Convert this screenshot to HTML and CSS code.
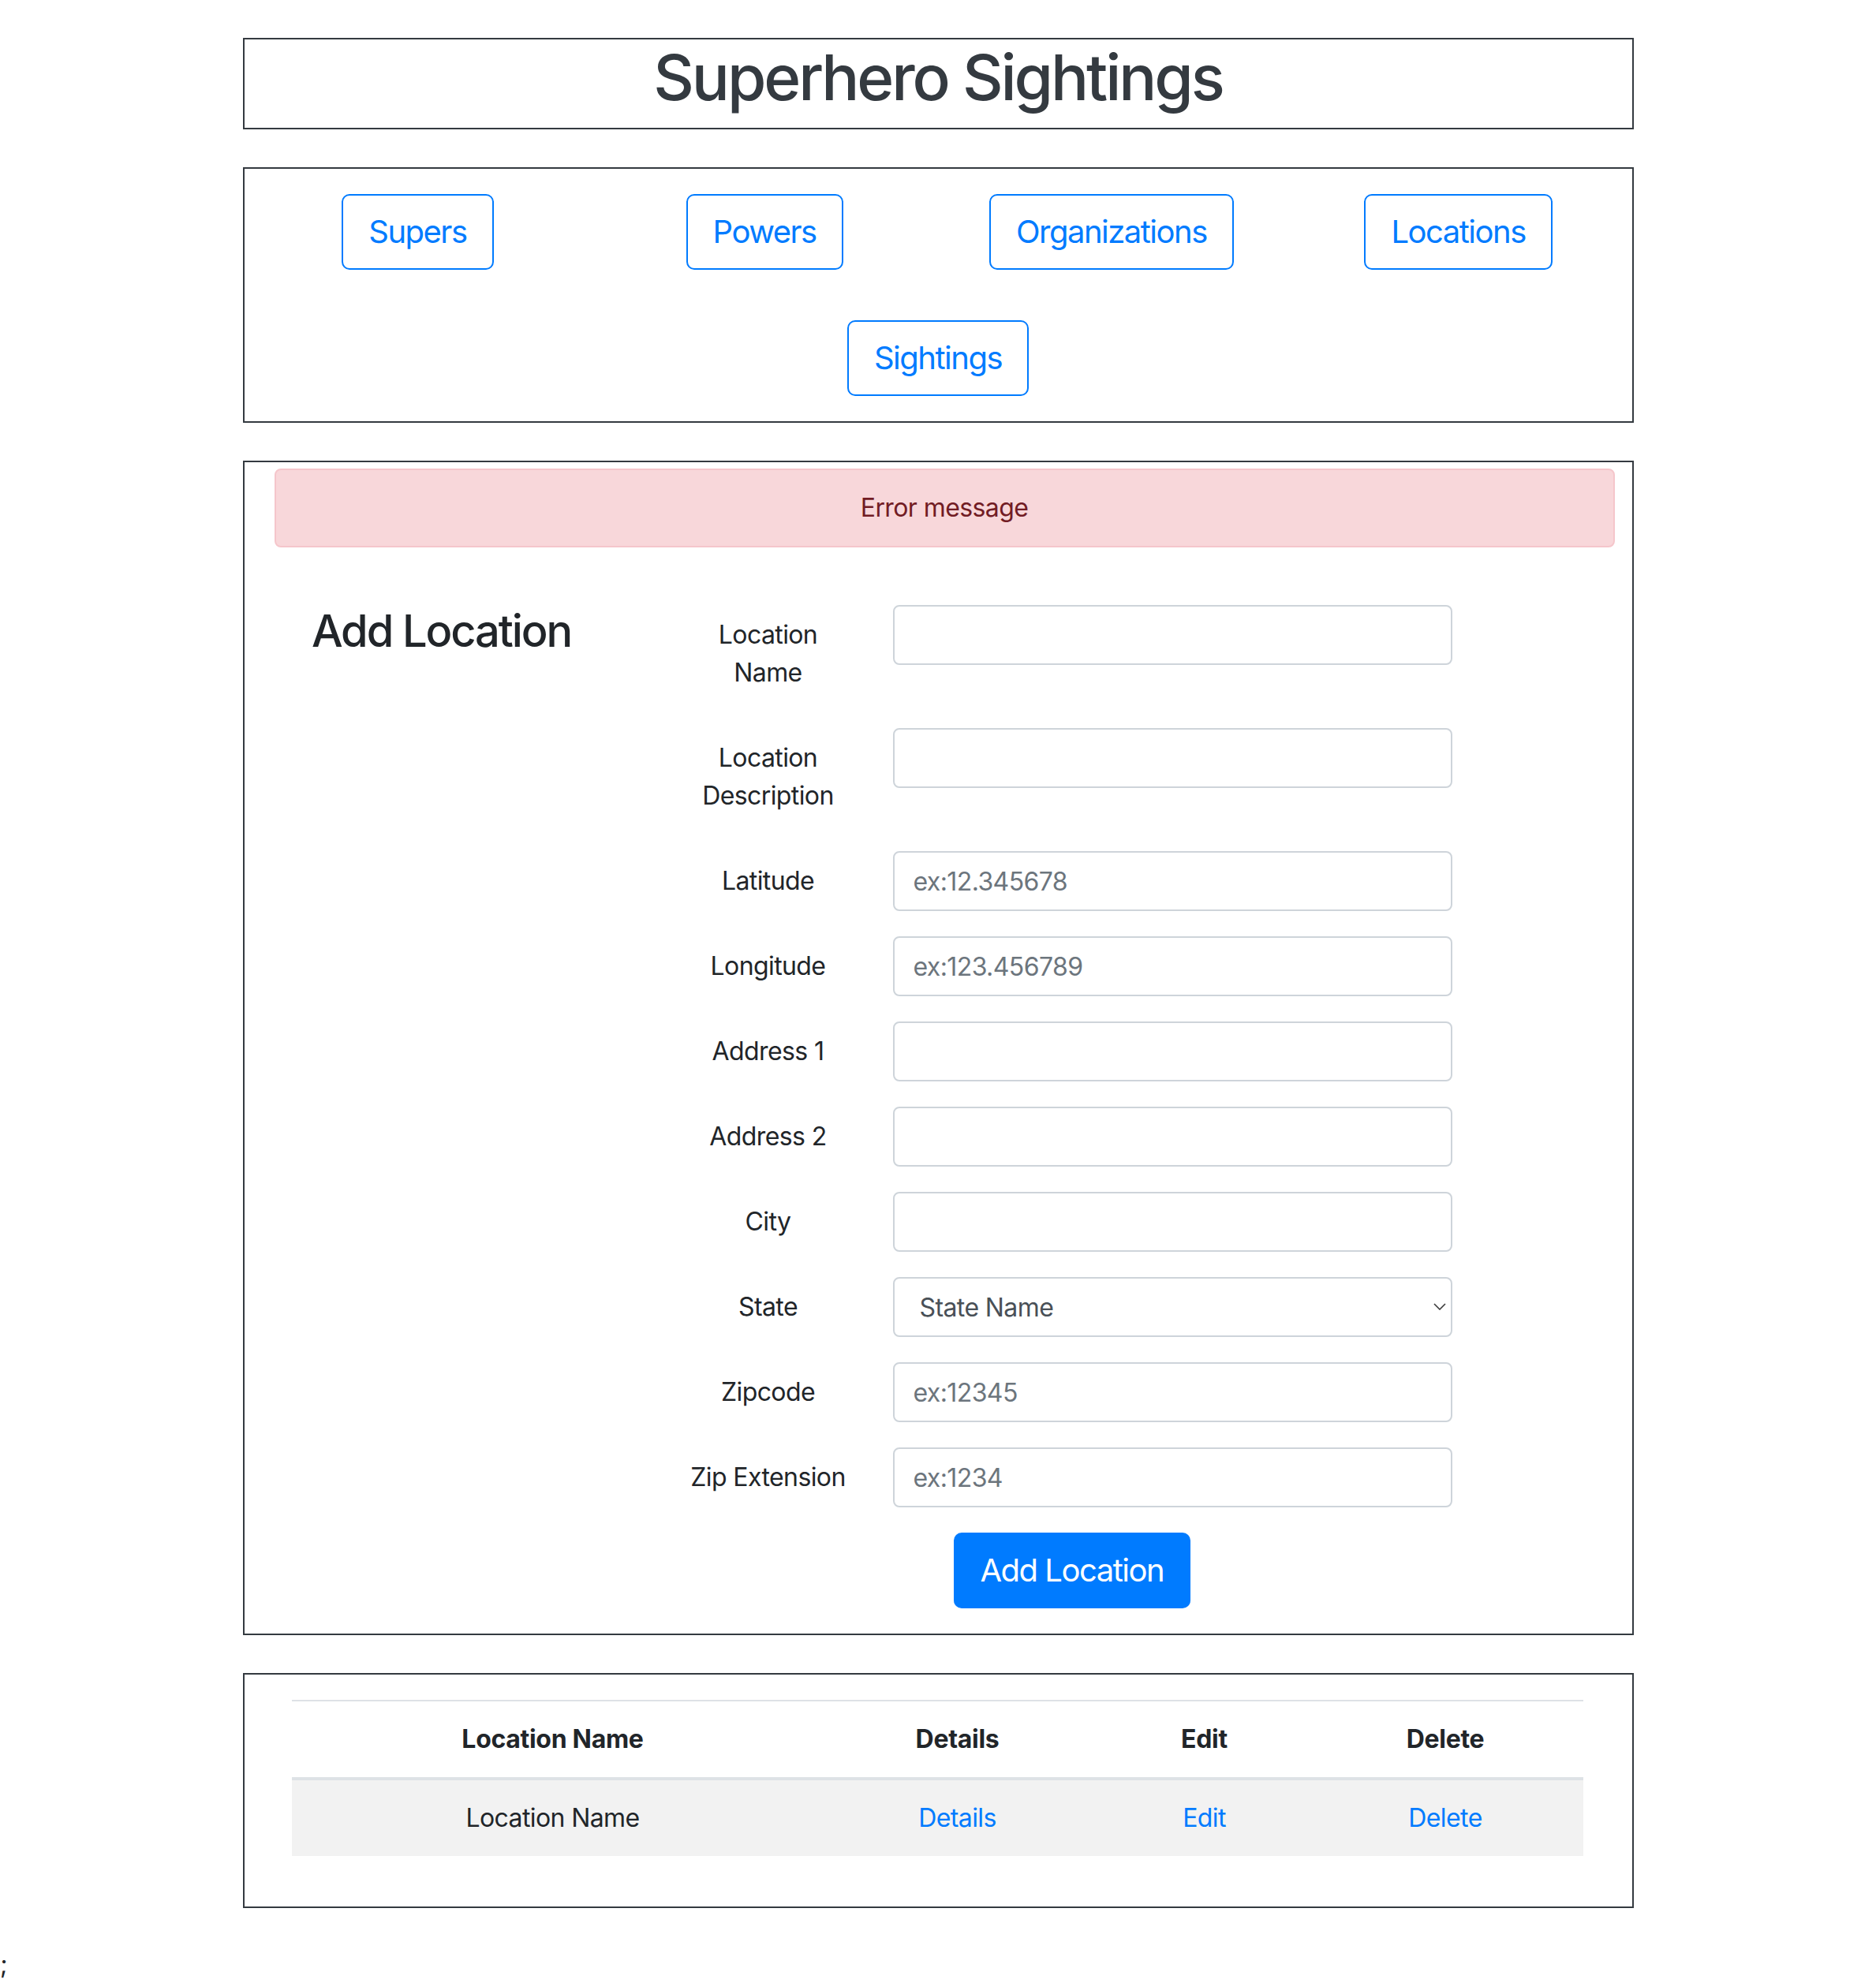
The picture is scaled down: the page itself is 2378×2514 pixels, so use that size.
FILE: index.html
```html
<!DOCTYPE html>
<html lang="en">
<head>
<meta charset="utf-8">
<title>Superhero Sightings</title>
<link rel="stylesheet" href="styles.css">
</head>
<body>
<div class="page">
  <header class="box title-box">
    <h1>Superhero Sightings</h1>
  </header>

  <nav class="box nav-box">
    <div class="nav-cell"><a class="btn btn-outline" href="#">Supers</a></div>
    <div class="nav-cell"><a class="btn btn-outline" href="#">Powers</a></div>
    <div class="nav-cell"><a class="btn btn-outline" href="#">Organizations</a></div>
    <div class="nav-cell"><a class="btn btn-outline" href="#">Locations</a></div>
    <div class="nav-cell"><a class="btn btn-outline" href="#">Sightings</a></div>
  </nav>

  <section class="box form-box">
    <div class="alert">Error message</div>
    <div class="form-row">
      <div class="heading-col"><h3>Add Location</h3></div>
      <form class="form-col">
        <div class="field"><label>Location<br>Name</label><input type="text"></div>
        <div class="field"><label>Location<br>Description</label><input type="text"></div>
        <div class="field"><label>Latitude</label><input type="text" placeholder="ex:12.345678"></div>
        <div class="field"><label>Longitude</label><input type="text" placeholder="ex:123.456789"></div>
        <div class="field"><label>Address 1</label><input type="text"></div>
        <div class="field"><label>Address 2</label><input type="text"></div>
        <div class="field"><label>City</label><input type="text"></div>
        <div class="field"><label>State</label>
          <div class="select-wrap">
            <select><option>State Name</option></select>
            <svg class="chev" viewBox="0 0 16 9" width="16" height="9"><polyline points="1,1 8,8 15,1" fill="none" stroke="#3a3a3a" stroke-width="1.6"/></svg>
          </div>
        </div>
        <div class="field"><label>Zipcode</label><input type="text" placeholder="ex:12345"></div>
        <div class="field"><label>Zip Extension</label><input type="text" placeholder="ex:1234"></div>
        <div class="submit-row"><button type="button" class="btn btn-primary">Add Location</button></div>
      </form>
    </div>
  </section>

  <section class="box table-box">
    <table>
      <colgroup>
        <col class="c1"><col class="c2"><col class="c3"><col class="c4">
      </colgroup>
      <thead>
        <tr><th>Location Name</th><th>Details</th><th>Edit</th><th>Delete</th></tr>
      </thead>
      <tbody>
        <tr><td>Location Name</td><td><a href="#">Details</a></td><td><a href="#">Edit</a></td><td><a href="#">Delete</a></td></tr>
      </tbody>
    </table>
  </section>
</div>
;
</body>
</html>
```

FILE: styles.css
```css
*, *::before, *::after { box-sizing: border-box; }

html, body { margin: 0; padding: 0; }

body {
  font-family: Inter, "Noto Sans", "Liberation Sans", sans-serif;
  font-size: 32px;
  line-height: 48px;
  letter-spacing: -0.6px;
  color: #212529;
  background: #ffffff;
}

.page {
  width: 1763px;
  margin: 0 auto;
  padding-top: 48px;
}

.box {
  border: 2px solid #343a40;
  margin-bottom: 48px;
}

.title-box h1 {
  margin: 0 0 16px;
  font-size: 80px;
  line-height: 96px;
  font-weight: 500;
  letter-spacing: -3.1px;
  text-align: center;
  color: #343a40;
}

.nav-box {
  display: flex;
  flex-wrap: wrap;
  justify-content: center;
}

.nav-cell {
  width: 25%;
  padding: 32px 0;
  display: flex;
  justify-content: center;
}

.btn {
  display: inline-block;
  font-family: inherit;
  font-size: 40px;
  line-height: 60px;
  font-weight: 400;
  letter-spacing: -1.5px;
  padding: 16px 32px;
  border: 2px solid #007bff;
  border-radius: 10px;
  text-decoration: none;
  cursor: pointer;
}

.btn-outline { color: #007bff; background: #ffffff; }
.btn-primary { color: #ffffff; background: #007bff; }

.alert {
  margin: 8px 22px 73px 38px;
  padding: 24px 40px;
  border: 2px solid #f5c6cb;
  border-radius: 8px;
  background: #f8d7da;
  color: #721c24;
  text-align: center;
}

.form-row {
  display: flex;
  align-items: flex-start;
}

.heading-col {
  width: 500px;
  flex: none;
  text-align: center;
}

.heading-col h3 {
  margin: 0;
  font-size: 56px;
  line-height: 67px;
  font-weight: 500;
  letter-spacing: -2.1px;
  color: #212529;
}

.form-col { flex: 1; }

.field {
  display: flex;
  align-items: flex-start;
  margin-bottom: 32px;
}

.field label {
  width: 322px;
  flex: none;
  padding: 14px 0 14px 6px;
  text-align: center;
}

.field input,
.select-wrap {
  width: 709px;
  flex: none;
}

.field input,
.field select {
  height: 76px;
  border: 2px solid #ced4da;
  border-radius: 8px;
  background: #ffffff;
  font-family: inherit;
  font-size: 32px;
  letter-spacing: -0.6px;
  color: #495057;
  padding: 0 24px;
  outline: none;
}

.field input::placeholder { color: #6c757d; opacity: 1; }

.select-wrap { position: relative; }

.field select {
  width: 100%;
  appearance: none;
  -webkit-appearance: none;
  padding-left: 32px;
}

.chev {
  position: absolute;
  right: 8px;
  top: 33px;
  pointer-events: none;
}

.submit-row {
  padding-left: 399px;
  padding-bottom: 32px;
}

.table-box {
  padding: 32px 62px 32px 60px;
}

table {
  width: 100%;
  border-collapse: collapse;
  table-layout: fixed;
  margin-bottom: 32px;
}

col.c1 { width: 662px; }
col.c2 { width: 364px; }
col.c3 { width: 262px; }
col.c4 { width: 349px; }

th, td {
  padding: 24px;
  text-align: center;
  border-top: 2px solid #dee2e6;
  line-height: 48px;
}

thead th {
  font-weight: 700;
  letter-spacing: -0.3px;
  border-bottom: 4px solid #dee2e6;
}

tbody tr { background: #f2f2f2; }

td a { color: #007bff; text-decoration: none; }
```
